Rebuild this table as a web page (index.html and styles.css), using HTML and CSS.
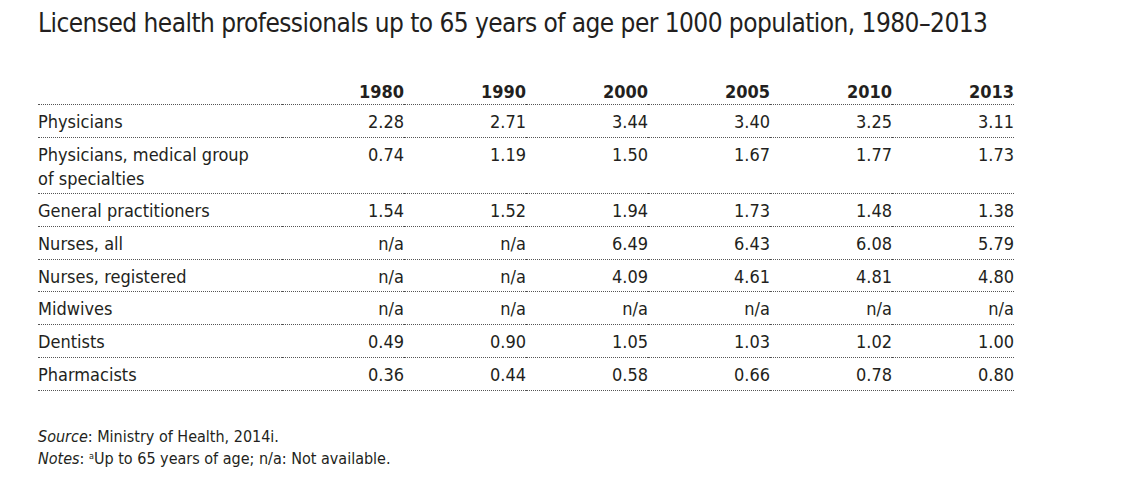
FILE: index.html
```html
<!DOCTYPE html>
<html>
<head>
<meta charset="utf-8">
<link rel="stylesheet" href="styles.css">
</head>
<body>
<div class="page">
  <h1 class="title">Licensed health professionals up to 65 years of age per 1000 population, 1980–2013</h1>
  <table class="data">
    <thead>
      <tr><th class="label"></th><th>1980</th><th>1990</th><th>2000</th><th>2005</th><th>2010</th><th>2013</th></tr>
    </thead>
    <tbody>
      <tr><td class="label">Physicians</td><td>2.28</td><td>2.71</td><td>3.44</td><td>3.40</td><td>3.25</td><td>3.11</td></tr>
      <tr class="tall"><td class="label">Physicians, medical group<br>of specialties</td><td>0.74</td><td>1.19</td><td>1.50</td><td>1.67</td><td>1.77</td><td>1.73</td></tr>
      <tr><td class="label">General practitioners</td><td>1.54</td><td>1.52</td><td>1.94</td><td>1.73</td><td>1.48</td><td>1.38</td></tr>
      <tr><td class="label">Nurses, all</td><td>n/a</td><td>n/a</td><td>6.49</td><td>6.43</td><td>6.08</td><td>5.79</td></tr>
      <tr class="short"><td class="label">Nurses, registered</td><td>n/a</td><td>n/a</td><td>4.09</td><td>4.61</td><td>4.81</td><td>4.80</td></tr>
      <tr><td class="label">Midwives</td><td>n/a</td><td>n/a</td><td>n/a</td><td>n/a</td><td>n/a</td><td>n/a</td></tr>
      <tr><td class="label">Dentists</td><td>0.49</td><td>0.90</td><td>1.05</td><td>1.03</td><td>1.02</td><td>1.00</td></tr>
      <tr><td class="label">Pharmacists</td><td>0.36</td><td>0.44</td><td>0.58</td><td>0.66</td><td>0.78</td><td>0.80</td></tr>
    </tbody>
  </table>
  <div class="notes">
    <p><em>Source</em>: Ministry of Health, 2014i.</p>
    <p><em>Notes</em>: <sup>a</sup>Up to 65 years of age; n/a: Not available.</p>
  </div>
</div>
</body>
</html>
```
FILE: styles.css
```css
html, body {
  margin: 0;
  padding: 0;
  background: #ffffff;
}
.page {
  padding: 0 0 0 38px;
  font-family: "DejaVu Sans Condensed", "Liberation Sans", sans-serif;
  color: #231f20;
}
.title {
  margin: 0;
  padding-top: 6px;
  font-size: 26px;
  letter-spacing: -0.55px;
  line-height: 34px;
  font-weight: normal;
  color: #231f20;
  white-space: nowrap;
}
.data {
  margin-top: 32px;
  border-collapse: collapse;
  width: 976px;
  font-size: 18px;
  table-layout: fixed;
}
.data th, .data td {
  width: 122px;
  text-align: right;
  border-bottom: 1px dotted #555;
  line-height: 24px;
  vertical-align: top;
}
.data th {
  font-weight: bold;
  padding: 8px 0 0 0;
}
.data td {
  padding: 5px 0 3px 0;
}
.data .tall td {
  padding-bottom: 2px;
}
.data .short td {
  padding-bottom: 2px;
}
.data .label {
  width: 244px;
  text-align: left;
}
.notes {
  margin-top: 35px;
  font-size: 16px;
  line-height: 22px;
}
.notes p {
  margin: 0;
}
.notes sup {
  font-size: 9px;
  line-height: 0;
  vertical-align: 5px;
}
```
